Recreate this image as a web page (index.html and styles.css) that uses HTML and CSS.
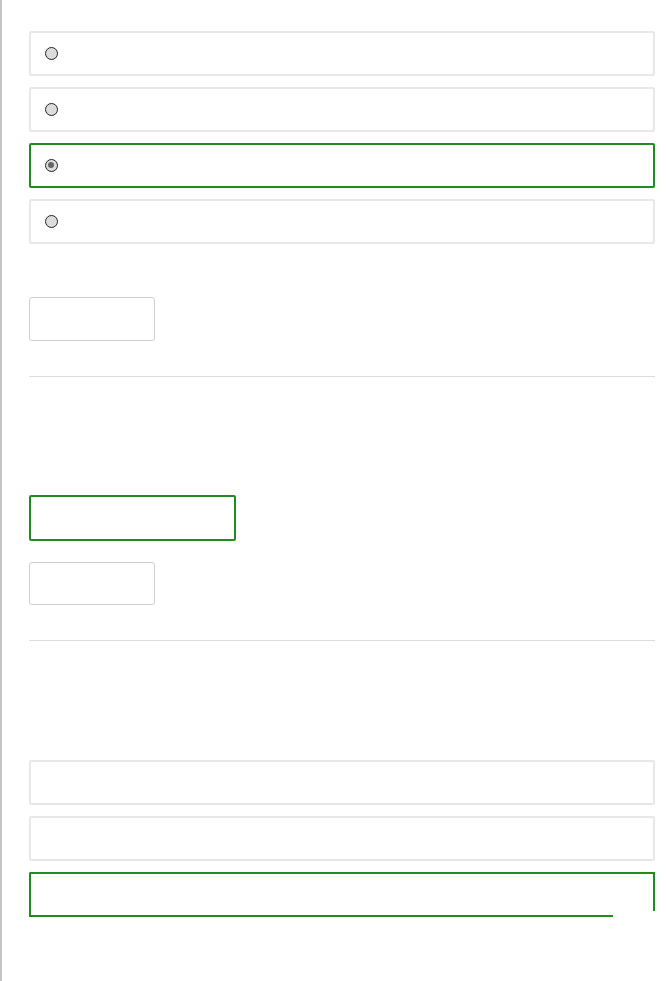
FILE: index.html
```html
<!DOCTYPE html>
<html lang="en">
<head>
    <meta charset="UTF-8">
    <meta name="viewport" content="width=device-width, initial-scale=1.0">
    <title>Quiz</title>
    <link rel="stylesheet" href="styles.css">
</head>
<body>
    <div class="page">
        <div class="question first">
            <div class="options">
                <label class="option"><span class="radio"></span></label>
                <label class="option"><span class="radio"></span></label>
                <label class="option selected"><span class="radio checked"></span></label>
                <label class="option"><span class="radio"></span></label>
            </div>
            <button type="button" class="btn"></button>
        </div>

        <hr class="divider">

        <div class="question second">
            <div class="answer-box"></div>
            <button type="button" class="btn"></button>
        </div>

        <hr class="divider">

        <div class="question third">
            <div class="options">
                <div class="option"></div>
                <div class="option"></div>
                <div class="option drawing"></div>
            </div>
        </div>
    </div>
</body>
</html>
```

FILE: styles.css
```css
html, body {
    margin: 0;
    padding: 0;
    background: #fff;
    font-family: Arial, "Liberation Sans", sans-serif;
}

body {
    min-height: 981px;
    border-left: 2px solid #c4c4c4;
    box-sizing: border-box;
}

.page {
    padding: 31px 10px 0 27px;
    width: 626px;
}

.options {
    display: flex;
    flex-direction: column;
    gap: 11px;
}

.option {
    display: flex;
    align-items: center;
    height: 45px;
    box-sizing: border-box;
    border: 2px solid #e8e8e8;
    border-radius: 2px;
    padding-left: 14px;
}

.option.selected {
    border-color: #218b21;
}

.radio {
    width: 13px;
    height: 13px;
    box-sizing: border-box;
    border-radius: 50%;
    border: 1.5px solid #222;
    background: #dcdcdc;
    position: relative;
}

.radio.checked::after {
    content: "";
    position: absolute;
    left: 2px;
    top: 2px;
    width: 6px;
    height: 6px;
    border-radius: 50%;
    background: #666;
}

.btn {
    display: block;
    width: 126px;
    height: 44px;
    border: 1px solid #cfcfcf;
    border-radius: 3px;
    background: #fff;
    padding: 0;
}

.first .btn {
    margin-top: 53px;
}

.divider {
    border: none;
    border-top: 1px solid #dcdcdc;
    margin: 0;
}

.first + .divider {
    margin-top: 35px;
}

.second {
    padding-top: 118px;
}

.answer-box {
    width: 207px;
    height: 46px;
    box-sizing: border-box;
    border: 2px solid #218b21;
    border-radius: 2px;
}

.second .btn {
    margin-top: 21px;
    height: 43px;
}

.second + .divider {
    margin-top: 35px;
}

.third {
    padding-top: 119px;
}

.option.drawing {
    position: relative;
    border-color: #218b21;
    border-right-color: transparent;
    border-bottom-color: transparent;
}

.option.drawing::before {
    content: "";
    position: absolute;
    left: -2px;
    bottom: -2px;
    width: 584px;
    height: 2px;
    background: #218b21;
}

.option.drawing::after {
    content: "";
    position: absolute;
    right: -2px;
    top: -2px;
    width: 2px;
    height: 39px;
    background: #218b21;
}
```
